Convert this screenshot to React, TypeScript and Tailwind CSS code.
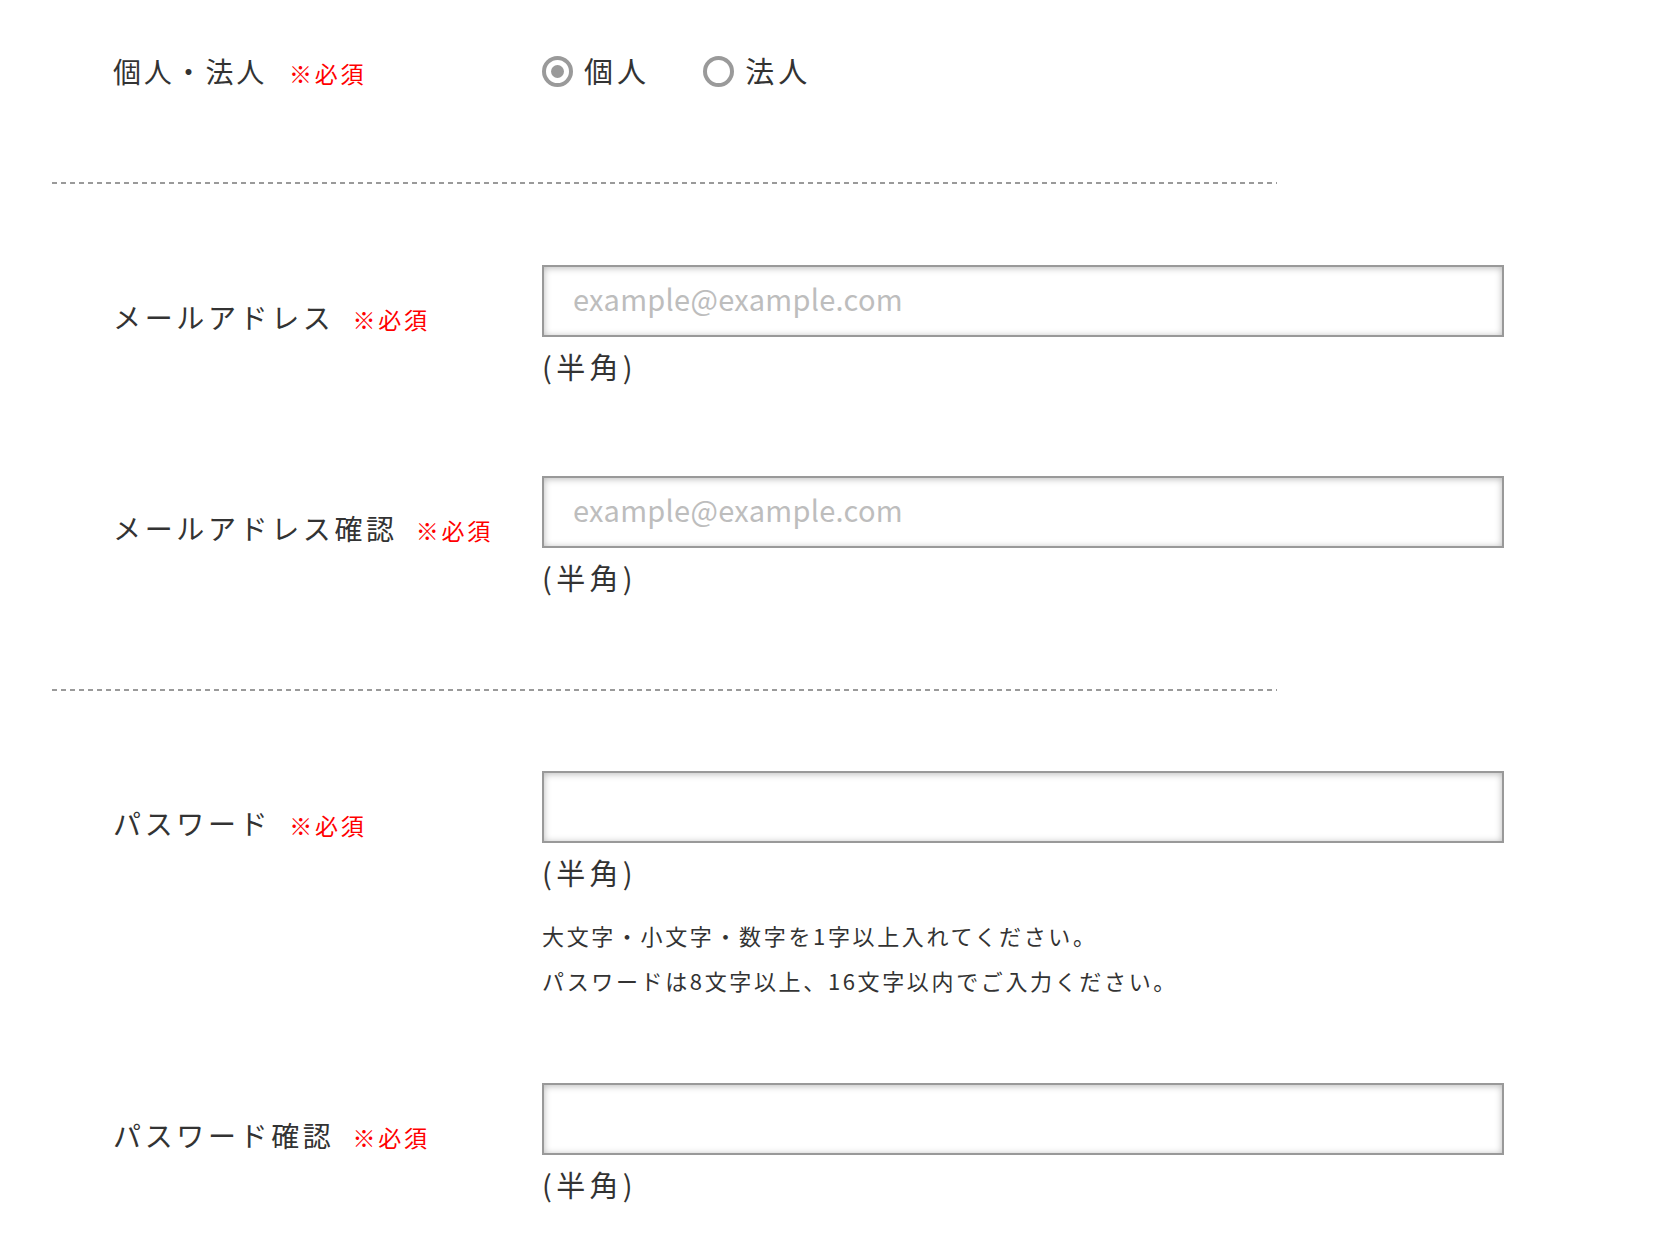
const font = { fontFamily: '"Noto Sans CJK JP", "Noto Sans", sans-serif' }

function Required({ className }: { className?: string }) {
  return (
    <span className={'text-[23px] tracking-[0.12em] text-[#ff0000] ' + (className ?? 'ml-[18px]')}>※必須</span>
  )
}

function Divider({ className }: { className?: string }) {
  return (
    <div
      className={
        'h-[2px] w-[1225px] bg-[repeating-linear-gradient(90deg,#9a9a9a_0_5px,transparent_5px_9px)] ' +
        (className ?? '')
      }
    />
  )
}

function Radio({ label, checked }: { label: string; checked?: boolean }) {
  return (
    <label className="flex items-center">
      <span className="flex h-[31px] w-[31px] items-center justify-center rounded-full border-[4px] border-[#9a9a9a] bg-white">
        {checked && <span className="h-[13px] w-[13px] rounded-full bg-[#9a9a9a]" />}
      </span>
      <span className="ml-[11px] text-[29px] tracking-[0.14em]">{label}</span>
    </label>
  )
}

function FieldRow({
  label,
  placeholder,
  type = 'text',
  className,
  children,
}: {
  label: string
  placeholder?: string
  type?: string
  className?: string
  children?: React.ReactNode
}) {
  return (
    <div className={'flex pl-[61px] ' + (className ?? '')}>
      <div className="w-[429px] shrink-0 pt-[31px]">
        <div className="flex items-baseline leading-[42px]">
          <span className="text-[28px] tracking-[0.13em]">{label}</span>
          <Required />
        </div>
      </div>
      <div className="w-[962px] shrink-0">
        <input
          type={type}
          placeholder={placeholder}
          className="block h-[72px] w-full border-2 border-[#999] bg-white px-[29px] pb-[6px] text-[29px] tracking-[0.01em] text-[#333] shadow-[inset_0_1px_7px_rgba(0,0,0,0.28)] outline-none placeholder:text-[#bdbdbd]"
          style={font}
        />
        <p className="mt-[8px] text-[29px] leading-[42px] tracking-[0.15em]">(半角)</p>
        {children}
      </div>
    </div>
  )
}

export default function App() {
  return (
    <div className="min-h-screen bg-white pl-[52px] pt-[50px] text-[#333]" style={font}>
      {/* 個人・法人 */}
      <div className="flex h-[42px] items-center pl-[61px]">
        <div className="flex w-[429px] shrink-0 items-baseline">
          <span className="text-[28px] tracking-[0.1em]">個人・法人</span>
          <Required className="ml-[22px]" />
        </div>
        <div className="flex items-center gap-[53px]">
          <Radio label="個人" checked />
          <Radio label="法人" />
        </div>
      </div>

      <Divider className="mt-[90px]" />

      <FieldRow className="mt-[81px]" label="メールアドレス" placeholder="example@example.com" />
      <FieldRow className="mt-[89px]" label="メールアドレス確認" placeholder="example@example.com" />

      <Divider className="mt-[91px]" />

      <FieldRow className="mt-[80px]" label="パスワード" type="password">
        <div className="mt-[20px] text-[22px] leading-[45px] tracking-[0.12em]">
          <p>大文字・小文字・数字を1字以上入れてください。</p>
          <p>パスワードは8文字以上、16文字以内でご入力ください。</p>
        </div>
      </FieldRow>
      <FieldRow className="mt-[80px]" label="パスワード確認" type="password" />
    </div>
  )
}
